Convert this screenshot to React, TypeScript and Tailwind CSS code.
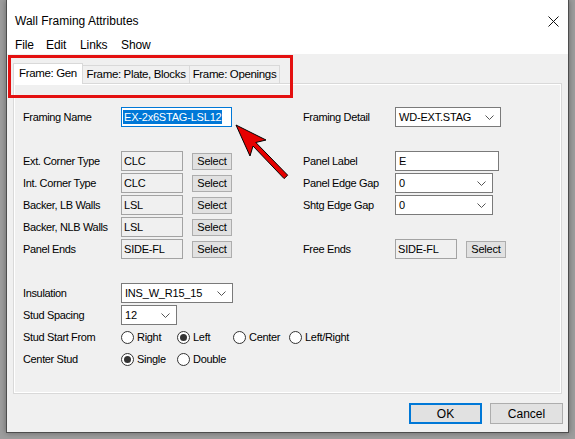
import React from 'react';

const ui = { fontFamily: '"Liberation Sans", Arial, sans-serif' };

function Chevron() {
  return (
    <svg width="9" height="5" viewBox="0 0 9 5" className="shrink-0">
      <path d="M0.5 0.5 L4.5 4.5 L8.5 0.5" fill="none" stroke="#555" strokeWidth="1" />
    </svg>
  );
}

function Label({ children }: { children: React.ReactNode }) {
  return <div className="text-[11px] tracking-[-0.35px] leading-[20px] text-black whitespace-nowrap">{children}</div>;
}

function Dropdown({ value, width }: { value: string; width: string }) {
  return (
    <div className={`${width} h-[20px] bg-white border border-[#7a7a7a] flex items-center justify-between pl-[3px] pr-[6px] text-[11px] tracking-[-0.2px]`}>
      <span>{value}</span>
      <Chevron />
    </div>
  );
}

function ReadBox({ value }: { value: string }) {
  return (
    <div className="w-[62px] h-[20px] bg-[#f0f0f0] border border-[#a3a3a3] pl-[2px] text-[11px] tracking-[-0.2px] leading-[18px]">
      {value}
    </div>
  );
}

function SelectButton() {
  return (
    <button className="w-[40px] h-[17px] bg-[#e1e1e1] border border-[#adadad] text-[11px] tracking-[-0.2px] leading-[15px] text-black">
      Select
    </button>
  );
}

function PickField({ value }: { value: string }) {
  return (
    <div className="flex items-center gap-[9px]">
      <ReadBox value={value} />
      <SelectButton />
    </div>
  );
}

function Radio({ label, checked }: { label: string; checked?: boolean }) {
  return (
    <div className="w-[56px] flex items-center gap-[3px] text-[11px] tracking-[-0.3px] whitespace-nowrap">
      <span className="w-[13px] h-[13px] rounded-full border border-[#333] bg-white flex items-center justify-center shrink-0">
        {checked && <span className="w-[7px] h-[7px] rounded-full bg-[#333]" />}
      </span>
      {label}
    </div>
  );
}

function Row({ left, leftField, right, rightField }: { left?: string; leftField?: React.ReactNode; right?: string; rightField?: React.ReactNode }) {
  return (
    <div className="flex h-[20px] items-center">
      <div className="w-[98px]">{left && <Label>{left}</Label>}</div>
      <div className="w-[182px]">{leftField}</div>
      <div className="w-[92px]">{right && <Label>{right}</Label>}</div>
      <div>{rightField}</div>
    </div>
  );
}

export default function App() {
  return (
    <div className="relative w-[575px] h-[439px] bg-[#9d9d9d] overflow-hidden" style={ui}>
      {/* dialog window */}
      <div className="ml-[6px] w-[563px] h-[433px] bg-[#f0f0f0] border-x border-b border-[#4d4d4d] flex flex-col shadow-[0_0_6px_rgba(0,0,0,0.35)]">
        <div className="bg-white h-[54px] shrink-0">
          <div className="h-[33px] pt-[9px] pl-[8px] pr-[8px] flex justify-between">
            <span className="text-[12px] leading-[24px] text-black">Wall Framing Attributes</span>
            <svg width="11" height="11" viewBox="0 0 11 11" className="mt-[7px] mr-[1px]">
              <path d="M0.5 0.5 L10.5 10.5 M10.5 0.5 L0.5 10.5" stroke="#111" strokeWidth="1" />
            </svg>
          </div>
          <div className="h-[21px] pt-[3px] pl-[8px] flex text-[12px] tracking-[-0.1px] leading-[18px] text-black">
            <span className="w-[31px]">File</span>
            <span className="w-[34px]">Edit</span>
            <span className="w-[41px]">Links</span>
            <span>Show</span>
          </div>
        </div>

        {/* tab strip */}
        <div className="mt-[9px] ml-[6px] flex items-end h-[20px] relative z-10 text-[11.5px] tracking-[-0.35px] whitespace-nowrap">
          <div className="w-[70px] h-[21px] bg-white border border-b-0 border-[#d9d9d9] flex items-center justify-center mb-[-1px] pb-[1px]">
            Frame: Gen
          </div>
          <div className="w-[107px] h-[18px] bg-[#f0f0f0] border border-l-0 border-b-0 border-[#d9d9d9] flex items-center justify-center">
            Frame: Plate, Blocks
          </div>
          <div className="w-[90px] h-[18px] bg-[#f0f0f0] border border-l-0 border-b-0 border-[#d9d9d9] flex items-center justify-center">
            Frame: Openings
          </div>
        </div>

        {/* tab page */}
        <div className="ml-[6px] w-[549px] h-[311px] border border-[#d9d9d9] shrink-0">
          <div className="h-full border border-white pt-[22px] pl-[8px] flex flex-col gap-[2px]">
            <Row
              left="Framing Name"
              leftField={
                <div className="w-[111px] h-[20px] bg-white border border-[#0078d7] flex items-center pl-[1px]">
                  <span className="bg-[#0078d7] text-white text-[11px] tracking-[-0.2px] leading-[14px] px-[1px]">EX-2x6STAG-LSL12</span>
                </div>
              }
              right="Framing Detail"
              rightField={<Dropdown value="WD-EXT.STAG" width="w-[106px]" />}
            />
            <div className="h-[20px]" />
            <Row left="Ext. Corner Type" leftField={<PickField value="CLC" />} right="Panel Label"
              rightField={<div className="w-[104px] h-[20px] bg-white border border-[#7a7a7a] pl-[3px] text-[11px] leading-[18px]">E</div>} />
            <Row left="Int. Corner Type" leftField={<PickField value="CLC" />} right="Panel Edge Gap"
              rightField={<Dropdown value="0" width="w-[98px]" />} />
            <Row left="Backer, LB Walls" leftField={<PickField value="LSL" />} right="Shtg Edge Gap"
              rightField={<Dropdown value="0" width="w-[98px]" />} />
            <Row left="Backer, NLB Walls" leftField={<PickField value="LSL" />} />
            <Row left="Panel Ends" leftField={<PickField value="SIDE-FL" />} right="Free Ends"
              rightField={<PickField value="SIDE-FL" />} />
            <div className="h-[20px]" />
            <Row left="Insulation" leftField={<Dropdown value="INS_W_R15_15" width="w-[112px]" />} />
            <Row left="Stud Spacing" leftField={<Dropdown value="12" width="w-[56px]" />} />
            <div className="flex h-[20px] items-center">
              <div className="w-[98px]"><Label>Stud Start From</Label></div>
              <div className="flex">
                <Radio label="Right" />
                <Radio label="Left" checked />
                <Radio label="Center" />
                <Radio label="Left/Right" />
              </div>
            </div>
            <div className="flex h-[20px] items-center">
              <div className="w-[98px]"><Label>Center Stud</Label></div>
              <div className="flex">
                <Radio label="Single" checked />
                <Radio label="Double" />
              </div>
            </div>
          </div>
        </div>

        {/* dialog buttons */}
        <div className="mt-[9px] mr-[5px] flex justify-end gap-[8px] text-[12px]">
          <button className="w-[73px] h-[21px] bg-[#e1e1e1] border-2 border-[#0078d7] text-black">OK</button>
          <button className="w-[73px] h-[21px] bg-[#e1e1e1] border border-[#adadad] text-black">Cancel</button>
        </div>
      </div>

      {/* callout frame around the tabs */}
      <div className="absolute left-[8px] top-[55px] w-[285px] h-[43px] border-[3px] border-[#e41010]" />

      {/* callout arrow */}
      <svg className="absolute left-0 top-0" width="575" height="439" viewBox="0 0 575 439">
        <polygon
          points="236,125 250,156 253,146 284.1,178.6 287.7,175.2 255.8,142.5 266,140"
          fill="#e60000"
          stroke="#000"
          strokeWidth="1"
          strokeLinejoin="miter"
        />
      </svg>
    </div>
  );
}
